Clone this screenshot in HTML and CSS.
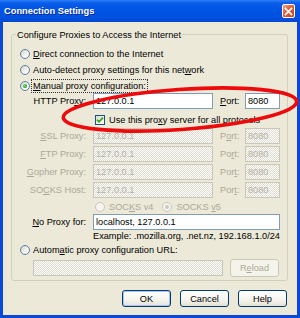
FILE: index.html
```html
<!DOCTYPE html>
<html>
<head>
<meta charset="utf-8">
<title>Connection Settings</title>
<link rel="stylesheet" href="styles.css">
</head>
<body>
<div class="window">
  <div class="titlebar">
    <span class="title">Connection Settings</span>
    <span class="close"><svg width="9" height="9" viewBox="0 0 9 9"><path d="M1.5 1.5L7.5 7.5M7.5 1.5L1.5 7.5" stroke="#fff" stroke-width="1.7" stroke-linecap="square"/></svg></span>
  </div>
  <div class="client">
    <div class="group">
      <div class="legend">Configure Proxies to Access the Internet</div>
      <div class="row opt first"><span class="radio"></span><span class="text"><u>D</u>irect connection to the Internet</span></div>
      <div class="row opt"><span class="radio"></span><span class="text">Auto-detect proxy settings for this net<u>w</u>ork</span></div>
      <div class="row opt r3"><span class="radio on"></span><span class="text focus"><u>M</u>anual proxy configuration:</span></div>
      <div class="row prow"><span class="plabel">HTTP Pro<u>x</u>y:</span><span class="field host">127.0.0.1</span><span class="portlbl"><u>P</u>ort:</span><span class="field port">8080</span></div>
      <div class="row chk"><span class="check"><svg width="8" height="8" viewBox="0 0 8 8"><path d="M1 3.8L3 5.8L7 1.6" fill="none" stroke="#21A121" stroke-width="1.6"/></svg></span><span class="text">Use this pro<u>x</u>y server for all protocols</span></div>
      <div class="row prow dis firstdis"><span class="plabel"><u>S</u>SL Proxy:</span><span class="field host">127.0.0.1</span><span class="portlbl">P<u>o</u>rt:</span><span class="field port">8080</span></div>
      <div class="row prow dis"><span class="plabel"><u>F</u>TP Proxy:</span><span class="field host">127.0.0.1</span><span class="portlbl">Po<u>r</u>t:</span><span class="field port">8080</span></div>
      <div class="row prow dis"><span class="plabel"><u>G</u>opher Proxy:</span><span class="field host">127.0.0.1</span><span class="portlbl">Por<u>t</u>:</span><span class="field port">8080</span></div>
      <div class="row prow dis"><span class="plabel">SO<u>C</u>KS Host:</span><span class="field host">127.0.0.1</span><span class="portlbl">Por<u>t</u>:</span><span class="field port">8080</span></div>
      <div class="row socks"><span class="radio off"></span><span class="text">SOC<u>K</u>S v4</span><span class="radio off on v5"></span><span class="text">SOCKS <u>v</u>5</span></div>
      <div class="row prow"><span class="plabel"><u>N</u>o Proxy for:</span><span class="field wide">localhost, 127.0.0.1</span></div>
      <div class="row example"><span class="text">Example: .mozilla.org, .net.nz, 192.168.1.0/24</span></div>
      <div class="row opt"><span class="radio"></span><span class="text">Autom<u>a</u>tic proxy configuration URL:</span></div>
      <div class="row urlrow dis"><span class="field url"></span><span class="btn disabled reload">R<u>e</u>load</span></div>
    </div>
    <div class="buttons">
      <span class="btn default">OK</span>
      <span class="btn">Cancel</span>
      <span class="btn">Help</span>
    </div>
  </div>
  <svg class="mark" width="300" height="318" viewBox="0 0 300 318">
    <ellipse cx="180" cy="109.5" rx="117" ry="20" transform="rotate(-4 180 109.5)" fill="none" stroke="#EE0A0A" stroke-width="3.6"/>
  </svg>
</div>
</body>
</html>
```

FILE: styles.css
```css
html, body {
  margin: 0;
  padding: 0;
  background: #ffffff;
}

.window {
  position: relative;
  width: 300px;
  height: 318px;
  background: #0A48DA;
  display: flex;
  flex-direction: column;
  font-family: "Liberation Sans", Arial, sans-serif;
  font-size: 9.2px;
  color: #000;
  overflow: hidden;
}

.titlebar {
  flex: none;
  height: 22px;
  box-sizing: border-box;
  display: flex;
  align-items: center;
  justify-content: space-between;
  padding: 0 5px 0 4px;
  background: linear-gradient(#2F7FF6 0, #0A5CEA 3px, #0055E5 45%, #004FDC 85%, #0047D0 100%);
}

.title {
  color: #fff;
  font-weight: bold;
  font-size: 9.3px;
  text-shadow: 1px 1px 0 #0C2A8E;
}

.close {
  width: 13px;
  height: 14px;
  box-sizing: border-box;
  border: 1px solid #fff;
  border-radius: 2px;
  background: linear-gradient(135deg, #F3A68C 0%, #E0623F 40%, #C9421E 100%);
  display: flex;
  align-items: center;
  justify-content: center;
}

.client {
  flex: 1;
  margin: 0 3px 3px 3px;
  background: #ECE9D8;
  padding: 12px 0 0 8px;
}

.group {
  width: 277px;
  box-sizing: border-box;
  border: 1px solid #D0D0BF;
  border-radius: 3px;
  padding-bottom: 3px;
}

.legend {
  margin: -5px 0 0 4px;
  padding: 0 1px;
  width: max-content;
  line-height: 11px;
  background: #ECE9D8;
}

.row {
  display: flex;
  align-items: center;
  white-space: nowrap;
}

.opt {
  height: 16px;
  padding-left: 8px;
}

.first {
  margin-top: 5px;
}

.r3 {
  height: 15px;
}

.radio {
  flex: none;
  width: 10px;
  height: 10px;
  box-sizing: border-box;
  border-radius: 50%;
  border: 1px solid #5A80AC;
  background: linear-gradient(135deg, #D6D3C6 0%, #F2F1EC 55%, #FFFFFF 100%);
  margin-right: 3px;
  display: flex;
  align-items: center;
  justify-content: center;
}

.radio.on::after {
  content: "";
  width: 4px;
  height: 4px;
  border-radius: 50%;
  background: radial-gradient(circle at 35% 35%, #8BE58B 0%, #2DB02D 50%, #16861A 100%);
}

.radio.off {
  border-color: #CAC8BB;
  background: #F5F4EE;
}

.radio.off.on::after {
  background: #CAC8BB;
}

.focus {
  outline: 1px dotted #333;
  outline-offset: 1px;
}

.prow {
  height: 16px;
}

.plabel {
  flex: none;
  width: 74px;
  margin-right: 7px;
  text-align: right;
}

.field {
  flex: none;
  height: 16px;
  box-sizing: border-box;
  border: 1px solid #7F9DB9;
  background: #fff;
  padding: 0 2px;
  line-height: 14px;
  overflow: hidden;
}

.host {
  width: 120px;
}

.portlbl {
  flex: none;
  width: 25px;
  margin-left: 7px;
}

.port {
  width: 35px;
}

.wide {
  width: 187px;
}

.chk {
  height: 15px;
  margin-top: 3px;
  padding-left: 83px;
}

.check {
  flex: none;
  width: 10px;
  height: 10px;
  box-sizing: border-box;
  border: 1px solid #1C5180;
  background: linear-gradient(135deg, #DCDACF 0%, #FFFFFF 100%);
  margin-right: 4px;
  display: flex;
  align-items: center;
  justify-content: center;
}

.prow.dis {
  margin-top: 2px;
}

.prow.firstdis {
  margin-top: 1px;
}

.dis .plabel,
.dis .portlbl {
  color: #ACA899;
}

.dis .field {
  border-color: #C9C7BA;
  color: #B4B0A2;
  background: repeating-conic-gradient(#FFFFFF 0 25%, #DDDACE 0 50%) 0 0 / 2px 2px;
}

.socks {
  height: 15px;
  margin-top: 1px;
  padding-left: 83px;
  color: #ACA899;
}

.socks .radio {
  margin-right: 4px;
}

.socks .v5 {
  margin-left: 9px;
}

.example {
  height: 12px;
  padding-left: 81px;
}

.urlrow {
  height: 18px;
  margin-top: 1px;
  padding-left: 21px;
}

.url {
  width: 190px;
}

.btn {
  flex: none;
  width: 49px;
  height: 17px;
  box-sizing: border-box;
  border: 1px solid #003C74;
  border-radius: 3px;
  background: linear-gradient(#FFFFFF 0%, #F6F5F0 55%, #E4E1D4 100%);
  display: flex;
  align-items: center;
  justify-content: center;
}

.btn.default {
  box-shadow: inset 0 0 0 1px #A9C4EE;
}

.btn.disabled {
  border-color: #C9C7BA;
  color: #ACA899;
  background: #F5F4EA;
}

.reload {
  height: 18px;
  margin-left: 7px;
}

.buttons {
  width: 276px;
  display: flex;
  justify-content: flex-end;
  gap: 9px;
  margin-top: 9px;
}

.mark {
  position: absolute;
  left: 0;
  top: 0;
  pointer-events: none;
}
```
